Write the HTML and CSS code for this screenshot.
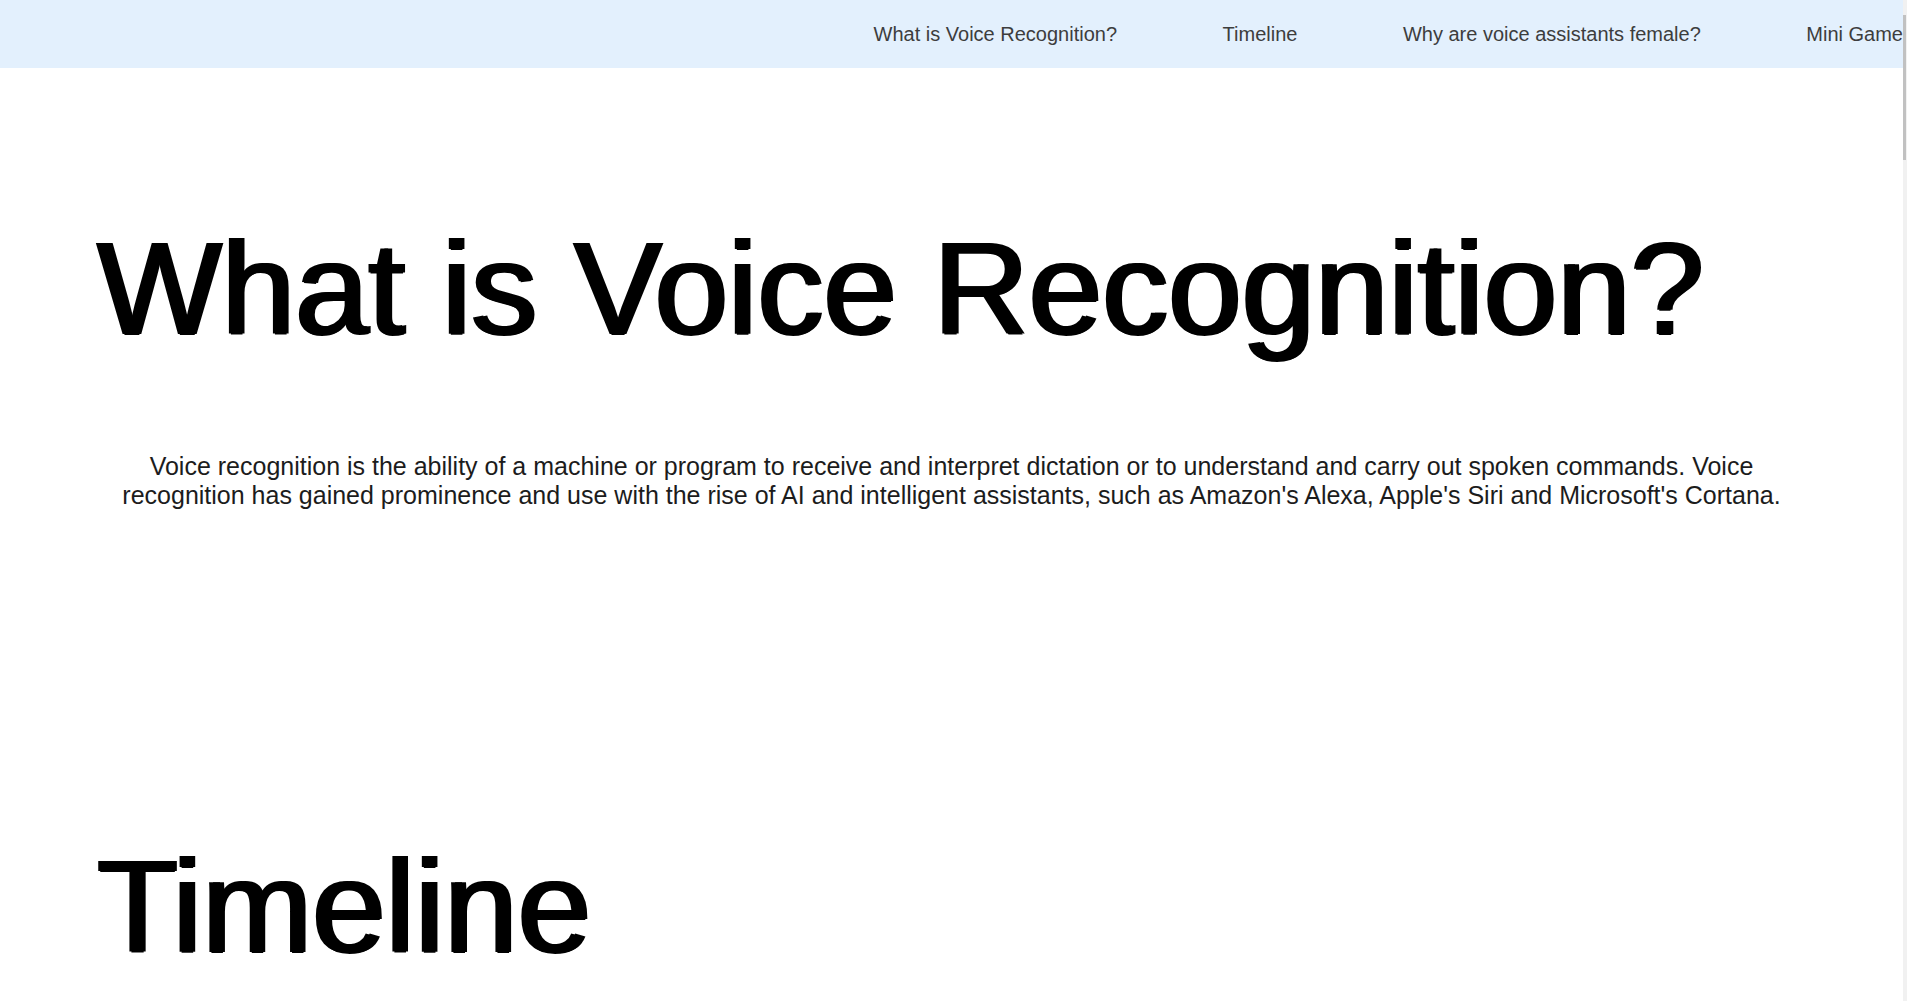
FILE: index.html
```html
<!DOCTYPE html>
<html lang="en">
<head>
<meta charset="utf-8">
<title>Voice Recognition</title>
<link rel="stylesheet" href="styles.css">
</head>
<body>
<div class="page">
  <header class="topnav">
    <ul class="nav-links">
      <li><a href="#intro">What is Voice Recognition?</a></li>
      <li><a href="#timeline">Timeline</a></li>
      <li><a href="#female">Why are voice assistants female?</a></li>
      <li><a href="#game">Mini Game</a></li>
    </ul>
  </header>
  <main>
    <section class="intro" id="intro">
      <h1 class="section-title">What is Voice Recognition?</h1>
      <p class="intro-text">Voice recognition is the ability of a machine or program to receive and interpret dictation or to understand and carry out spoken commands. Voice recognition has gained prominence and use with the rise of AI and intelligent assistants, such as Amazon's Alexa, Apple's Siri and Microsoft's Cortana.</p>
    </section>
    <section class="block" id="timeline">
      <h1 class="section-title">Timeline</h1>
    </section>
    <section class="block" id="female">
      <h1 class="section-title">Why are voice assistants female?</h1>
    </section>
    <section class="block" id="game">
      <h1 class="section-title">Mini Game</h1>
    </section>
  </main>
</div>
<div class="scroll-rail"><div class="scroll-thumb"></div></div>
</body>
</html>
```

FILE: styles.css
```css
html {
  background: #ffffff;
}

body {
  margin: 0;
  font-family: "Liberation Sans", Arial, sans-serif;
  color: #000;
}

.page {
  margin-right: 4px;
}

.scroll-rail {
  position: fixed;
  top: 0;
  right: 0;
  width: 4px;
  height: 100vh;
  background: #f1f1f1;
}

.scroll-thumb {
  margin-top: 15px;
  width: 3px;
  height: 145px;
  background: #c1c1c1;
}

.topnav {
  background: #e3f0fd;
  height: 68px;
  display: flex;
  align-items: center;
  justify-content: flex-end;
}

.nav-links {
  list-style: none;
  margin: 0;
  padding: 0;
  display: flex;
  gap: 105.5px;
}

.nav-links a {
  font-size: 20px;
  color: #3d3d3d;
  text-decoration: none;
  white-space: nowrap;
}

.section-title {
  margin: 0;
  font-size: 132px;
  font-weight: 400;
  line-height: 1.15;
  color: #000;
  text-shadow: 4px 0 0 #000, 2px 1px 0 #000;
}

.intro {
  padding: 145px 5% 177px;
}

.intro-text {
  margin: 87px 0 0;
  font-size: 25px;
  line-height: 1.15;
  text-align: center;
  color: #1c1c1c;
}

.block {
  padding: 145px 5% 0;
  min-height: 2000px;
  box-sizing: border-box;
}
```
